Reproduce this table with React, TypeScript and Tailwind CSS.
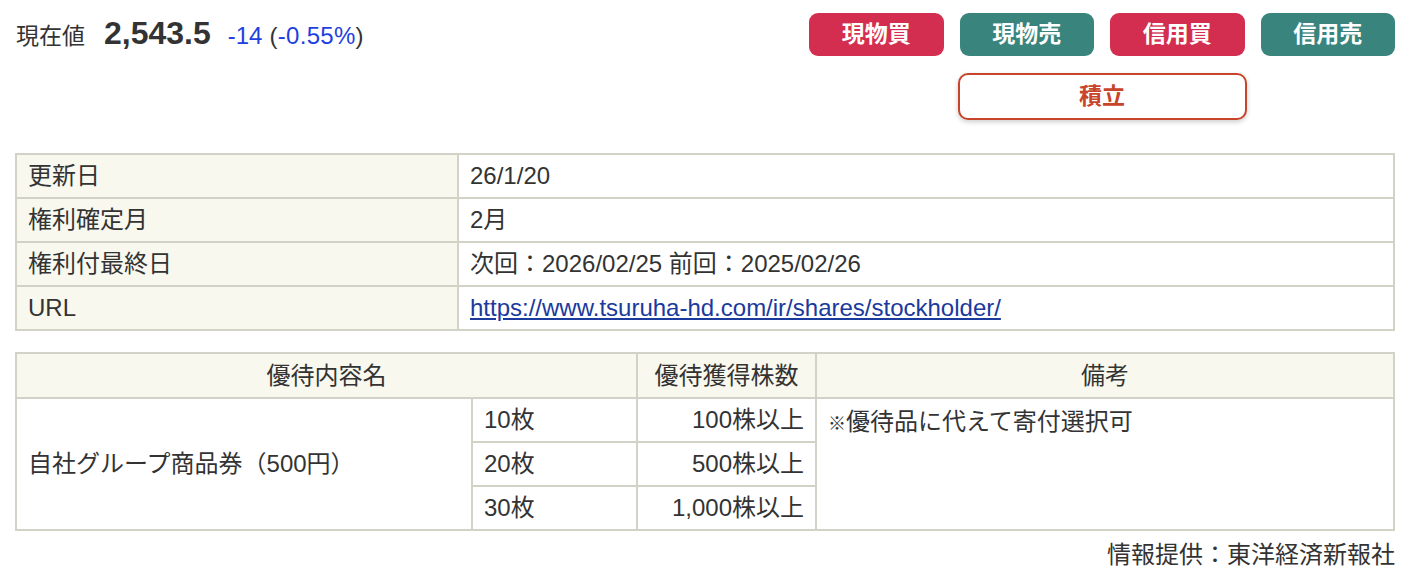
import React from "react";

const font = "font-['Liberation_Sans','Noto_Sans_CJK_JP',sans-serif]";

const infoRows = [
  { label: "更新日", value: "26/1/20" },
  { label: "権利確定月", value: "2月" },
  { label: "権利付最終日", value: "次回：2026/02/25 前回：2025/02/26" },
];

const tiers = [
  { count: "10枚", shares: "100株以上" },
  { count: "20枚", shares: "500株以上" },
  { count: "30枚", shares: "1,000株以上" },
];

export default function App() {
  const cell = "border-2 border-[#d2d2c6] h-[44px] px-[11px] py-0 align-middle";

  return (
    <div className={`${font} text-[#333] bg-white min-h-screen w-[1408px] pt-[13px]`}>
      <div className="ml-[15px] w-[1380px]">
        {/* price + order buttons */}
        <div className="flex justify-between items-start">
          <div className="flex items-baseline -mt-[4px] pl-[1px]">
            <span className="text-[23px]">現在値</span>
            <span className="text-[32px] font-bold ml-[19px]">2,543.5</span>
            <span className="text-[24px] ml-[17px] text-[#1f3fe0]">-14</span>
            <span className="text-[24px] ml-[7px] tracking-[0.3px]">
              (<span className="text-[#1f3fe0]">-0.55%</span>)
            </span>
          </div>

          <div className="grid grid-cols-4 gap-x-[16px] gap-y-[17px] w-[586px]">
            <button className="h-[43px] rounded-[9px] bg-[#d32e50] text-white text-[23px] font-bold">現物買</button>
            <button className="h-[43px] rounded-[9px] bg-[#3a847e] text-white text-[23px] font-bold">現物売</button>
            <button className="h-[43px] rounded-[9px] bg-[#d32e50] text-white text-[23px] font-bold">信用買</button>
            <button className="h-[43px] rounded-[9px] bg-[#3a847e] text-white text-[23px] font-bold">信用売</button>
            <div />
            <button className="col-span-2 -mx-[2px] h-[47px] rounded-[10px] border-2 border-[#c8452b] bg-white text-[#c8452b] text-[23px] font-bold shadow-[0_2px_5px_rgba(0,0,0,0.2)]">
              積立
            </button>
          </div>
        </div>

        {/* basic info */}
        <table className="w-full border-collapse table-fixed mt-[33px] text-[24px]">
          <colgroup>
            <col className="w-[442px]" />
            <col />
          </colgroup>
          <tbody>
            {infoRows.map((r) => (
              <tr key={r.label}>
                <td className={`${cell} bg-[#f8f8ef]`}>{r.label}</td>
                <td className={cell}>{r.value}</td>
              </tr>
            ))}
            <tr>
              <td className={`${cell} bg-[#f8f8ef]`}>URL</td>
              <td className={cell}>
                <a href="#" className="text-[#1a3a9c] underline">
                  https://www.tsuruha-hd.com/ir/shares/stockholder/
                </a>
              </td>
            </tr>
          </tbody>
        </table>

        {/* benefit table */}
        <table className="w-full border-collapse table-fixed mt-[21px] text-[24px]">
          <colgroup>
            <col className="w-[456px]" />
            <col className="w-[165px]" />
            <col className="w-[179px]" />
            <col />
          </colgroup>
          <thead>
            <tr className="bg-[#f8f8ef]">
              <th colSpan={2} className={`${cell} h-[45px] font-normal text-center`}>優待内容名</th>
              <th className={`${cell} h-[45px] font-normal text-center`}>優待獲得株数</th>
              <th className={`${cell} h-[45px] font-normal text-center`}>備考</th>
            </tr>
          </thead>
          <tbody>
            {tiers.map((t, i) => (
              <tr key={t.count}>
                {i === 0 && (
                  <td rowSpan={3} className={cell}>
                    自社グループ商品券（500円）
                  </td>
                )}
                <td className={cell}>{t.count}</td>
                <td className={`${cell} text-right`}>{t.shares}</td>
                {i === 0 && (
                  <td rowSpan={3} className={`${cell} align-top pt-[5px]`}>
                    <span className="text-[18px]">※</span>優待品に代えて寄付選択可
                  </td>
                )}
              </tr>
            ))}
          </tbody>
        </table>

        <p className="text-right text-[24px] mt-[6px]">情報提供：東洋経済新報社</p>
      </div>
    </div>
  );
}
